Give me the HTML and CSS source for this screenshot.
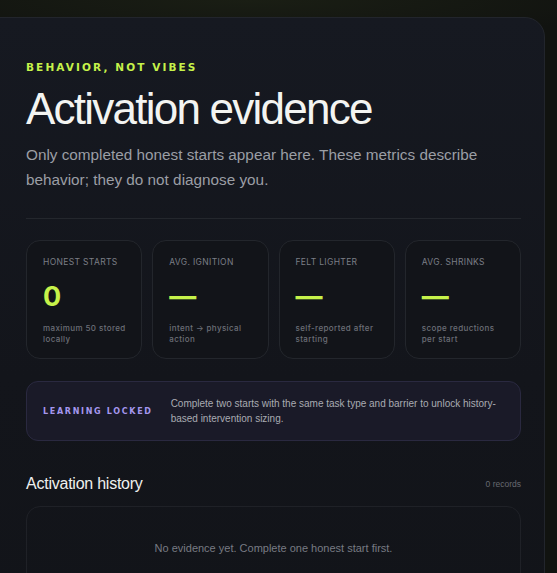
FILE: index.html
```html
<!DOCTYPE html>
<html lang="en">
<head>
<meta charset="utf-8">
<title>Activation evidence</title>
<link rel="stylesheet" href="styles.css">
</head>
<body>
<div class="page">
  <section class="panel">
    <p class="eyebrow">Behavior, not vibes</p>
    <h1 class="title">Activation evidence</h1>
    <p class="lede">Only completed honest starts appear here. These metrics describe behavior; they do not diagnose you.</p>
    <hr class="divider">
    <div class="stats">
      <div class="stat">
        <div class="stat-label">Honest starts</div>
        <div class="stat-value">0</div>
        <div class="stat-note">maximum 50 stored locally</div>
      </div>
      <div class="stat">
        <div class="stat-label">Avg. ignition</div>
        <div class="stat-value">—</div>
        <div class="stat-note">intent → physical action</div>
      </div>
      <div class="stat">
        <div class="stat-label">Felt lighter</div>
        <div class="stat-value">—</div>
        <div class="stat-note">self-reported after starting</div>
      </div>
      <div class="stat">
        <div class="stat-label">Avg. shrinks</div>
        <div class="stat-value">—</div>
        <div class="stat-note">scope reductions per start</div>
      </div>
    </div>
    <div class="locked">
      <span class="locked-tag">Learning locked</span>
      <p class="locked-text">Complete two starts with the same task type and barrier to unlock history-based intervention sizing.</p>
    </div>
    <div class="history-head">
      <h2 class="history-title">Activation history</h2>
      <span class="history-count">0 records</span>
    </div>
    <div class="empty">No evidence yet. Complete one honest start first.</div>
  </section>
</div>
</body>
</html>
```

FILE: styles.css
```css
* { box-sizing: border-box; }
html, body { margin: 0; padding: 0; }
body {
  background: radial-gradient(ellipse 70% 40px at 45% 0, #1a1e14 0%, #111310 100%);
  background-color: #111310;
  font-family: "Liberation Sans", Arial, sans-serif;
  overflow: hidden;
  height: 573px;
}
.page {
  padding-top: 17px;
}
.panel {
  margin-left: -24px;
  width: 569px;
  min-height: 600px;
  background: linear-gradient(180deg, #161921 0%, #13151b 60%, #121419 100%);
  border: 1px solid #22252c;
  border-radius: 20px;
  padding: 42px 23px 0 49px;
}
.eyebrow {
  margin: 0;
  font-family: "DejaVu Sans", sans-serif;
  font-weight: 700;
  font-size: 10.5px;
  line-height: 14px;
  letter-spacing: 0.2em;
  text-transform: uppercase;
  color: #c6f24a;
}
.title {
  margin: 10px 0 0;
  font-family: "Liberation Sans", Arial, sans-serif;
  font-weight: 400;
  font-size: 44px;
  line-height: 50px;
  letter-spacing: -0.04em;
  color: #f3f4f1;
}
.lede {
  margin: 9px 0 0;
  font-size: 15.3px;
  line-height: 24.5px;
  color: #9b9ea5;
  max-width: 470px;
}
.divider {
  margin: 26px 0 0;
  border: 0;
  height: 1px;
  background: #24272d;
}
.stats {
  margin-top: 21px;
  display: grid;
  grid-template-columns: repeat(4, 1fr);
  gap: 10px;
}
.stat {
  height: 119px;
  background: #121419;
  border: 1px solid #23262c;
  border-radius: 14px;
  padding: 15px 15px 0 16px;
  font-family: Inter, "Liberation Sans", sans-serif;
}
.stat-label {
  font-size: 8.5px;
  line-height: 12px;
  letter-spacing: 0.04em;
  text-transform: uppercase;
  color: #7b7e86;
}
.stat-value {
  margin-top: 14px;
  height: 30px;
  font-size: 27px;
  line-height: 30px;
  font-weight: 700;
  color: #c6f24a;
}
.stat-note {
  margin-top: 11px;
  font-size: 8px;
  line-height: 11px;
  font-weight: 500;
  letter-spacing: 0.05em;
  color: #6c6f77;
}
.locked {
  margin-top: 22px;
  height: 60px;
  display: flex;
  align-items: center;
  gap: 18px;
  padding: 0 16px;
  background: #1a1a28;
  border: 1px solid #2a2940;
  border-radius: 12px;
}
.locked-tag {
  flex: none;
  font-family: "DejaVu Sans", sans-serif;
  font-weight: 700;
  font-size: 8px;
  letter-spacing: 0.21em;
  text-transform: uppercase;
  color: #a496ee;
}
.locked-text {
  margin: 0;
  font-size: 10px;
  line-height: 15px;
  color: #a9abb2;
}
.history-head {
  margin-top: 33px;
  display: flex;
  align-items: center;
  justify-content: space-between;
}
.history-title {
  margin: 0;
  font-weight: 400;
  font-size: 16px;
  line-height: 20px;
  letter-spacing: -0.015em;
  color: #eff0ee;
}
.history-count {
  font-size: 8.5px;
  color: #666970;
}
.empty {
  margin-top: 12px;
  height: 84px;
  border: 1px solid #1f2127;
  border-radius: 14px;
  display: flex;
  align-items: center;
  justify-content: center;
  font-size: 11px;
  color: #787b83;
}
```
